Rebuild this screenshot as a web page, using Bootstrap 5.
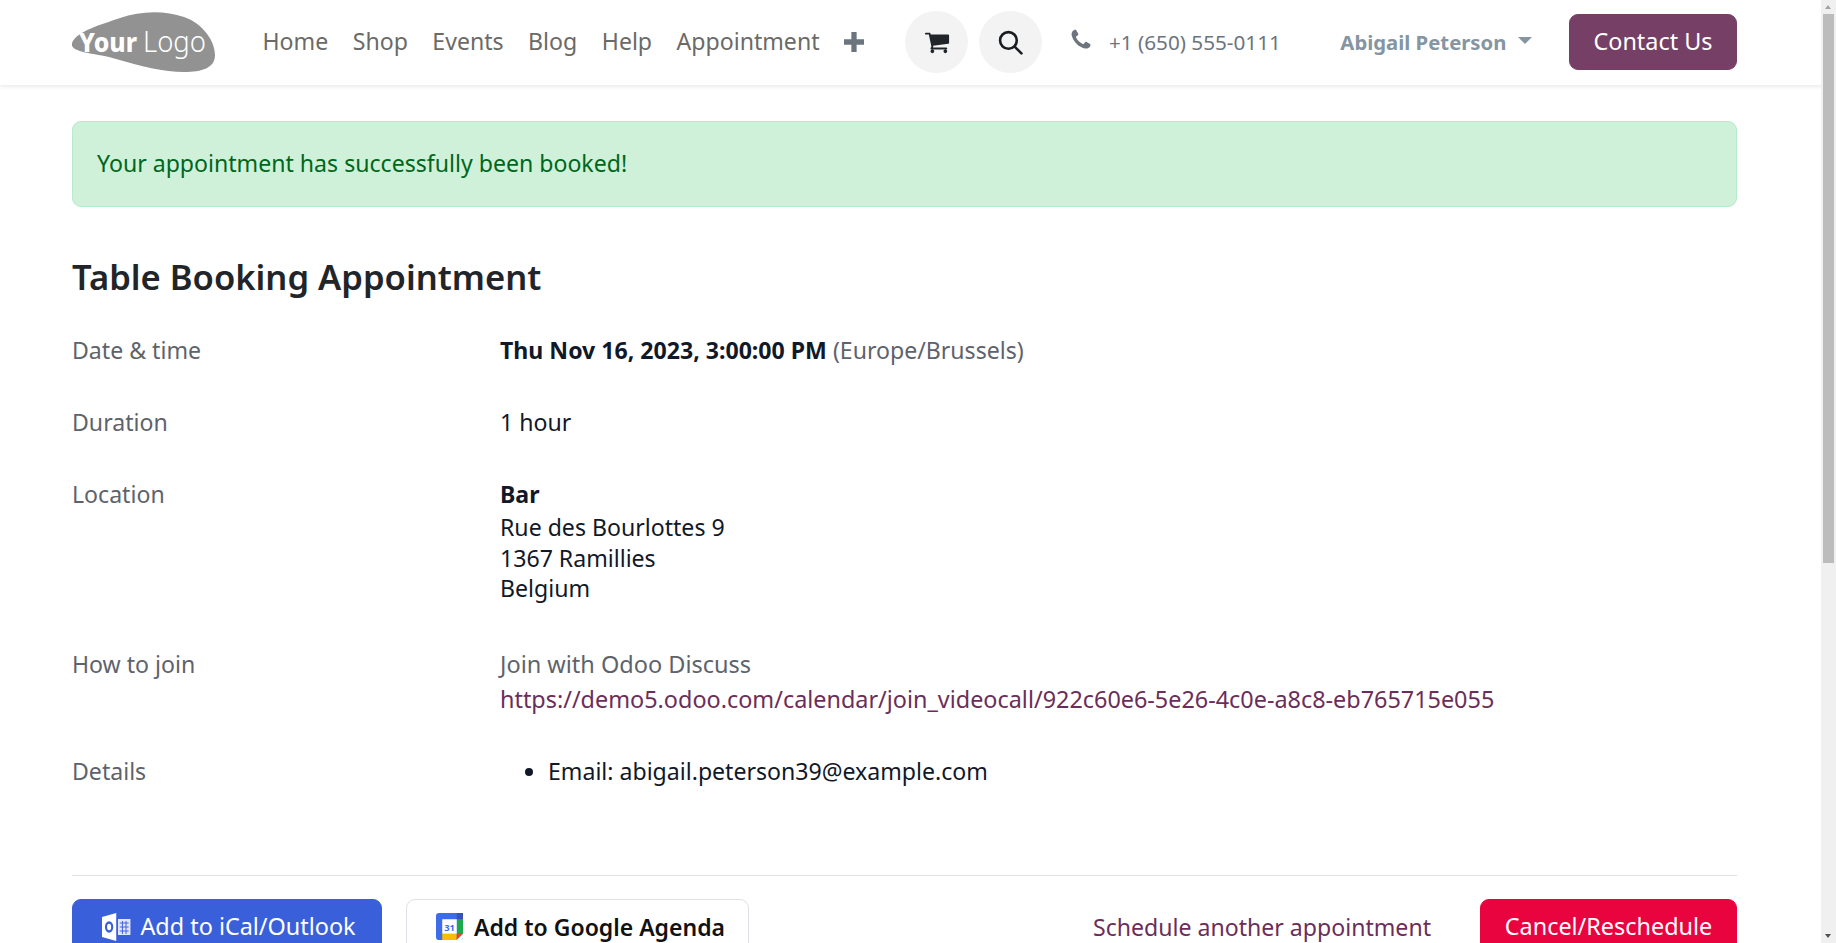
<!DOCTYPE html>
<html lang="en">
<head>
<meta charset="utf-8">
<title>Appointment</title>
<link href="https://cdn.jsdelivr.net/npm/bootstrap@5.3.0/dist/css/bootstrap.min.css" rel="stylesheet">
<style>
body{font-family:"Noto Sans",sans-serif;font-size:20.3px;line-height:30.45px;color:#111827;background:#fff;min-height:1000px}
.top-bar{height:85px;padding:0 99px 1px 72px;box-shadow:0 2px 4px rgba(0,0,0,.08);background:#fff}
.logo-link{width:144px;height:62px;margin-right:46.5px;flex:none}
.menu-link{color:#6b6a66;font-size:23.1px;text-decoration:none;margin-right:24.5px;margin-top:-2px}
.plus-ico{width:20px;height:20px;margin-right:41px}
.round-btn{width:63px;height:62px;border-radius:50%;background:#f3f3f3;flex:none;margin-right:11px}
.phone-ico{width:22px;height:24px;margin-left:17px;margin-right:17px;margin-top:-4px;fill:#6c757d}
.phone-num{font-size:20.7px;color:#6c757d;margin-right:59.5px}
.user-name{font-weight:700;color:#8595a2;font-size:20.3px;margin-right:12px}
.user-caret{width:0;height:0;border-left:7px solid transparent;border-right:7px solid transparent;border-top:7px solid #8595a2;margin-top:-4px}
.contact-btn{background:#763f66;color:#fff;border-color:#763f66;font-size:23.4px;width:168px;height:56px;border-radius:9px;display:flex;align-items:center;justify-content:center;padding:0;margin-left:auto}
.page-main{padding:36px 99px 0 72px}
.ok-box{height:86px;background:#cff1da;border:1px solid #b7eac8;color:#00661c;border-radius:9px;font-size:23.1px;padding:0 24px 2px;display:flex;align-items:center;margin:0}
.main-title{font-size:34.6px;font-weight:600;color:#212529;margin:49px 0 37px;line-height:42px}
.info-row{display:grid;grid-template-columns:428px 1fr;margin-bottom:41.6px;font-size:23.1px;line-height:30.45px}
.place-row{margin-bottom:45px}
.join-row{margin-bottom:41px}
.info-label{color:#5e636b}
.info-strong{font-weight:700}
.place-name{margin-bottom:2.6px}
.info-muted{color:#5e636b}
.join-text{font-size:23.5px}
.info-link{color:#6b2e5a;text-decoration:none;font-size:23.4px}
.join-gap{margin-bottom:5.5px}
.detail-list{margin:0;padding-left:48px}
.rule-line{border:0;border-top:1px solid #dee2e6;opacity:1;margin:88.5px 0 23.5px}
.act-btn{font-size:23.4px;height:55px;border-radius:9px;display:inline-flex;align-items:center;justify-content:center;padding:0;gap:6px}
.btn-outlook{background:#3a5fdb;border-color:#3a5fdb;color:#fff;width:310px;padding-left:4px}
.btn-google{background:#fff;border:1px solid #dee2e6;color:#111;font-weight:600;font-size:23px;width:343px;gap:11px;padding-left:6px}
.link-again{color:#6b2e5a;text-decoration:none;font-size:23.1px;margin-right:49px}
.btn-cancel{background:#e90440;border-color:#e90440;color:#fff;width:257px}
.fake-scroll{position:fixed;top:0;right:0;bottom:0;width:15px;background:#f0f0f0}
.fake-thumb{position:absolute;left:2px;right:2px;top:14px;height:549px;background:#bcbcbc}
.fake-arrow{position:absolute;left:4px;width:0;height:0;border-left:3.5px solid transparent;border-right:3.5px solid transparent}
.arrow-up{top:5px;border-bottom:4px solid #a3a3a3}
.arrow-down{bottom:5px;border-top:4px solid #505050}
</style>
</head>
<body>
<nav class="top-bar d-flex align-items-center">
  <a class="logo-link d-block" href="#" aria-label="Your Logo">
    <svg width="144" height="62" viewBox="0 0 144 62">
      <path d="M0 32C5 20 28 14 48 7C68 0 92 -1 112 6C132 13 143 31 143 44C143 57 130 61 112 61C92 61 68 55 44 48C24 42 -3 42 0 32Z" fill="#929292"/>
      <text x="7" y="41" textLength="58" lengthAdjust="spacingAndGlyphs" font-family="Noto Sans" font-weight="800" font-size="27" fill="#fff">Your</text>
      <text x="71" y="41" textLength="63" lengthAdjust="spacingAndGlyphs" font-family="Noto Sans" font-weight="300" font-size="29" fill="#fff">Logo</text>
    </svg>
  </a>
  <a class="menu-link" href="#">Home</a>
  <a class="menu-link" href="#">Shop</a>
  <a class="menu-link" href="#">Events</a>
  <a class="menu-link" href="#">Blog</a>
  <a class="menu-link" href="#">Help</a>
  <a class="menu-link" href="#">Appointment</a>
  <svg class="plus-ico" viewBox="0 0 19 19"><path d="M7 0h5v7h7v5h-7v7H7v-7H0V7h7z" fill="#6c757d"/></svg>
  <a class="round-btn d-flex align-items-center justify-content-center" href="#" aria-label="Cart">
    <svg width="26" height="26" viewBox="0 0 1664 1792"><path fill="#212529" d="M640 1536q0 52-38 90t-90 38-90-38-38-90 38-90 90-38 90 38 38 90zm896 0q0 52-38 90t-90 38-90-38-38-90 38-90 90-38 90 38 38 90zm128-1088v512q0 24-16.5 42.5t-40.5 21.5l-1044 122q13 60 13 70 0 16-24 64h920q26 0 45 19t19 45-19 45-45 19h-1024q-26 0-45-19t-19-45q0-11 8-31.5t16-36 21.5-40 15.5-29.5l-177-823h-204q-26 0-45-19t-19-45 19-45 45-19h256q16 0 28.5 6.5t19.5 15.5 13 24.5 8 26 5.5 29.5 4.5 26h1201q26 0 45 19t19 45z"/></svg>
  </a>
  <a class="round-btn d-flex align-items-center justify-content-center" href="#" aria-label="Search">
    <svg width="25" height="25" viewBox="0 0 24 24" fill="none" stroke="#1a1d21" stroke-width="2.5" stroke-linecap="round"><circle cx="10" cy="10" r="8"/><path d="M16 16l6.5 6.5"/></svg>
  </a>
  <svg class="phone-ico" viewBox="0 0 1408 1792"><path d="M1408 1240q0 27-10 70.5t-21 68.5q-21 50-122 106-94 51-186 51-27 0-53-3.5t-57.5-12.5-47-14.5-55.5-20.5-49-18q-98-35-175-83-127-79-264-216t-216-264q-48-77-83-175-3-9-18-49t-20.5-55.5-14.5-47-12.5-57.5-3.5-53q0-92 51-186 56-101 106-122 25-11 68.5-21t70.5-10q14 0 21 3 18 6 53 76 11 19 30 54t35 63.5 31 53.5q3 4 17.5 25t21.5 35.5 7 28.5q0 20-28.5 50t-62 55-62 53-28.5 46q0 9 5 22.5t8.5 20.5 14 24 11.5 19q76 137 174 235t235 174q2 1 19 11.5t24 14 20.5 8.5 22.5 5q18 0 46-28.5t53-62 55-62 50-28.5q14 0 28.5 7t35.5 21.5 25 17.5q25 15 53.5 31t63.5 35 54 30q70 35 76 53 3 7 3 21z"/></svg>
  <span class="phone-num">+1 (650) 555-0111</span>
  <span class="user-name">Abigail Peterson</span>
  <span class="user-caret"></span>
  <a class="btn contact-btn" href="#">Contact Us</a>
</nav>
<main class="page-main">
  <div class="alert ok-box" role="alert">Your appointment has successfully been booked!</div>
  <h1 class="main-title">Table Booking Appointment</h1>
  <div class="info-row"><div class="info-label">Date &amp; time</div><div><span class="info-strong">Thu Nov 16, 2023, 3:00:00 PM</span> <span class="info-muted">(Europe/Brussels)</span></div></div>
  <div class="info-row"><div class="info-label">Duration</div><div>1 hour</div></div>
  <div class="info-row place-row"><div class="info-label">Location</div><div><div class="info-strong place-name">Bar</div><div>Rue des Bourlottes 9</div><div>1367 Ramillies</div><div>Belgium</div></div></div>
  <div class="info-row join-row"><div class="info-label">How to join</div><div><div class="info-muted join-gap join-text">Join with Odoo Discuss</div><a class="info-link" href="#">https://demo5.odoo.com/calendar/join_videocall/922c60e6-5e26-4c0e-a8c8-eb765715e055</a></div></div>
  <div class="info-row"><div class="info-label">Details</div><div><ul class="detail-list"><li>Email: abigail.peterson39@example.com</li></ul></div></div>
  <hr class="rule-line">
  <div class="d-flex align-items-start">
    <a class="btn act-btn btn-outlook me-4" href="#">
      <svg width="32" height="28" viewBox="0 0 36 28" preserveAspectRatio="none"><path d="M0 4L16 0V28L0 24Z" fill="#fff"/><ellipse cx="8" cy="14" rx="3.5" ry="4.5" fill="none" stroke="#3a5fdb" stroke-width="2.4"/><rect x="18" y="6" width="14" height="16" fill="#dfe5fa"/><path d="M20 10h10M20 14h10M20 18h10M23 8v13M27 8v13" stroke="#3a5fdb"/></svg>
      Add to iCal/Outlook</a>
    <a class="btn act-btn btn-google" href="#">
      <svg width="27" height="27" viewBox="0 0 26 26"><rect width="26" height="26" rx="3" fill="#3d6ce8"/><rect x="20" y="0" width="6" height="6" fill="#3d50b8"/><rect x="20" y="6" width="6" height="14" fill="#1ca84f"/><rect x="6" y="20" width="14" height="6" fill="#fbbc04"/><path d="M20 20h6l-6 6z" fill="#ea4335"/><path d="M20 26l6-6v3a3 3 0 0 1-3 3z" fill="#fff"/><rect x="6" y="6" width="14" height="14" fill="#fff"/><text x="13" y="17" text-anchor="middle" font-family="Noto Sans" font-size="9" font-weight="700" fill="#3d6ce8">31</text></svg>
      Add to Google Agenda</a>
    <a class="link-again ms-auto align-self-center" href="#">Schedule another appointment</a>
    <a class="btn act-btn btn-cancel" href="#">Cancel/Reschedule</a>
  </div>
</main>
<div class="fake-scroll" aria-hidden="true"><div class="fake-thumb"></div><div class="fake-arrow arrow-up"></div><div class="fake-arrow arrow-down"></div></div>
</body>
</html>
